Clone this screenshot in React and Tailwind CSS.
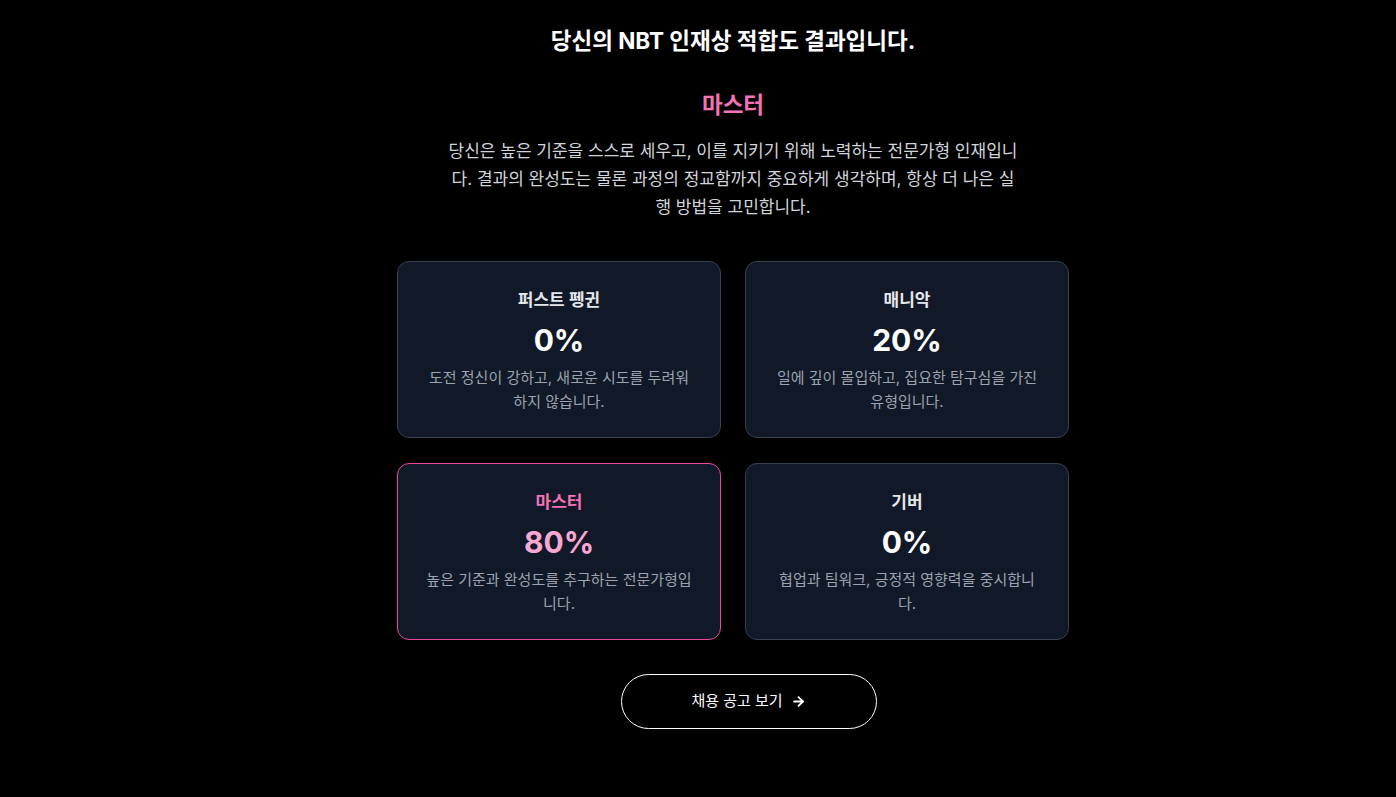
import React from "react";

const cards = [
  { title: "퍼스트 펭귄", pct: "0%", desc: "도전 정신이 강하고, 새로운 시도를 두려워하지 않습니다.", active: false },
  { title: "매니악", pct: "20%", desc: "일에 깊이 몰입하고, 집요한 탐구심을 가진 유형입니다.", active: false },
  { title: "마스터", pct: "80%", desc: "높은 기준과 완성도를 추구하는 전문가형입니다.", active: true },
  { title: "기버", pct: "0%", desc: "협업과 팀워크, 긍정적 영향력을 중시합니다.", active: false },
];

export default function App() {
  return (
    <div
      className="min-h-[797px] w-full bg-black text-white flex flex-col items-center pt-[25px] pl-[70px]"
      style={{ fontFamily: '"Inter", "Noto Sans CJK KR", "Noto Sans", sans-serif' }}
    >
      <h1 className="text-[22.5px] leading-8 font-bold text-white">당신의 NBT 인재상 적합도 결과입니다.</h1>
      <h2 className="mt-8 text-[22.5px] leading-8 font-semibold text-[#f472b6]">마스터</h2>
      <p className="mt-4 max-w-xl text-center text-[17px] leading-7 text-[#d1d5db]">
        당신은 높은 기준을 스스로 세우고, 이를 지키기 위해 노력하는 전문가형 인재입니다. 결과의 완성도는 물론 과정의 정교함까지 중요하게 생각하며, 항상 더 나은 실행 방법을 고민합니다.
      </p>
      <div className="mt-10 grid w-[672px] grid-cols-2 gap-x-6 gap-y-[25px]">
        {cards.map((c) => (
          <div
            key={c.title}
            className={
              c.active
                ? "flex h-[177px] flex-col items-center rounded-xl border border-[#ec4899] bg-[#111827] px-7 pt-6 text-center"
                : "flex h-[177px] flex-col items-center rounded-xl border border-[#374151] bg-[#111827] px-7 pt-6 text-center"
            }
          >
            <div className={c.active ? "text-[17px] leading-7 font-semibold text-[#f472b6]" : "text-[17px] leading-7 font-semibold text-[#e5e7eb]"}>
              {c.title}
            </div>
            <div className={c.active ? "mt-2 text-3xl leading-9 font-bold text-[#f9a8d4]" : "mt-2 text-3xl leading-9 font-bold text-white"}>
              {c.pct}
            </div>
            <div className="mt-2 text-[15px] leading-6 text-[#9ca3af]">{c.desc}</div>
          </div>
        ))}
      </div>
      <button className="mt-[34px] ml-[31px] flex h-[55px] w-[256px] items-center justify-center gap-2 rounded-full border border-white bg-black text-[15px] text-white">
        <span>채용 공고 보기</span>
        <svg width="15" height="15" viewBox="0 0 24 24" fill="none" stroke="currentColor" strokeWidth="3" strokeLinecap="round" strokeLinejoin="round">
          <path d="M5 12h14" />
          <path d="m12 5 7 7-7 7" />
        </svg>
      </button>
    </div>
  );
}
